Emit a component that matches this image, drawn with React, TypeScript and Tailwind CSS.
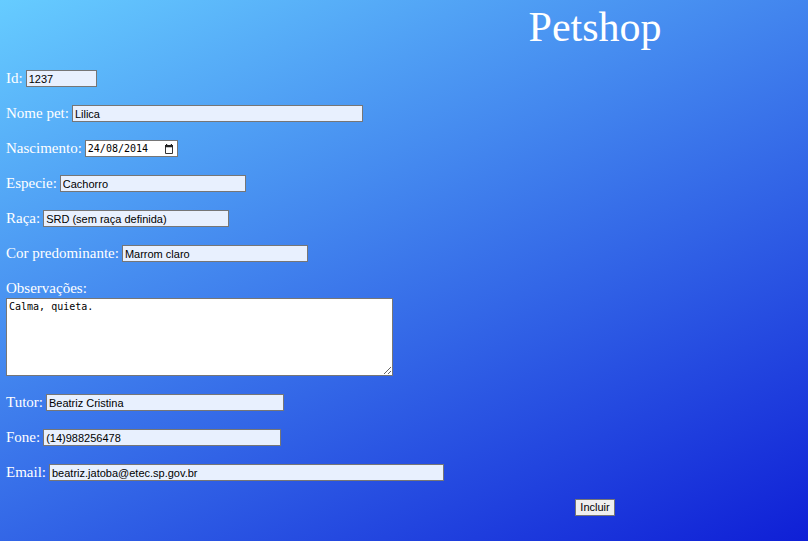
import { useState } from "react";
import type { ReactNode } from "react";

const inputClass =
  "h-[17px] min-w-0 border border-[#767676] bg-[#e8f0fe] px-[2px] font-['Liberation_Sans',Arial,sans-serif] text-[11px] leading-[15px] text-black outline-none";

type FieldProps = {
  id: string;
  label: string;
  value: string;
  width: string;
  type?: string;
};

function Row({ children }: { children: ReactNode }) {
  return <div className="flex h-[17px] items-start gap-[3px]">{children}</div>;
}

function Label({ htmlFor, children }: { htmlFor: string; children: ReactNode }) {
  return (
    <label htmlFor={htmlFor} className="shrink-0 text-[15px] leading-[17px]">
      {children}
    </label>
  );
}

function Field({ id, label, value, width, type = "text" }: FieldProps) {
  return (
    <Row>
      <Label htmlFor={id}>{label}</Label>
      <input id={id} name={id} type={type} defaultValue={value} className={`${inputClass} ${width}`} />
    </Row>
  );
}

function CalendarIcon() {
  return (
    <svg width="10" height="10" viewBox="0 0 10 10" fill="none" aria-hidden="true">
      <path d="M1.5 1.5h7v8h-7z" stroke="#333" />
      <path d="M1 1h8v2.2H1zM2 0h1.2v1.5H2zM6.8 0H8v1.5H6.8z" fill="#222" />
    </svg>
  );
}

function DateField() {
  const [date, setDate] = useState("24/08/2014");
  return (
    <Row>
      <Label htmlFor="nascimento">Nascimento:</Label>
      <div className="flex h-[17px] w-[93px] items-center border border-[#767676] bg-white pr-[3px] pl-[2px]">
        <input
          id="nascimento"
          name="nascimento"
          type="text"
          value={date}
          onChange={(e) => setDate(e.target.value)}
          className="min-w-0 flex-1 font-['DejaVu_Sans_Mono',monospace] text-[10px] leading-[15px] text-black outline-none"
        />
        <button type="button" aria-label="Abrir calendário">
          <CalendarIcon />
        </button>
      </div>
    </Row>
  );
}

export default function App() {
  return (
    <main className="min-h-screen overflow-hidden bg-[linear-gradient(155deg,#66ccff,#0f1fd6)] px-[6px] pb-6 font-['Liberation_Serif','Times_New_Roman',serif] text-white">
      <h1 className="ml-[48%] pt-[3px] text-center font-['Palatino_Linotype',Palatino,'Liberation_Serif',serif] text-[42px] leading-[48px]">
        Petshop
      </h1>
      <form className="mt-[19px] flex flex-col gap-[18px]" onSubmit={(e) => e.preventDefault()}>
        <Field id="id" label="Id:" value="1237" width="w-[71px]" />
        <Field id="nome" label="Nome pet:" value="Lilica" width="w-[291px]" />
        <DateField />
        <Field id="especie" label="Especie:" value="Cachorro" width="w-[186px]" />
        <Field id="raca" label="Raça:" value="SRD (sem raça definida)" width="w-[186px]" />
        <Field id="cor" label="Cor predominante:" value="Marrom claro" width="w-[186px]" />
        <div className="flex flex-col gap-px">
          <Label htmlFor="observacoes">Observações:</Label>
          <textarea
            id="observacoes"
            name="observacoes"
            defaultValue="Calma, quieta."
            className="h-[78px] w-[387px] resize border border-[#767676] bg-white p-[2px] font-['DejaVu_Sans_Mono',monospace] text-[10px] leading-3 text-black outline-none"
          />
        </div>
        <Field id="tutor" label="Tutor:" value="Beatriz Cristina" width="w-[238px]" />
        <Field id="fone" label="Fone:" value="(14)988256478" width="w-[238px]" type="tel" />
        <Field id="email" label="Email:" value="beatriz.jatoba@etec.sp.gov.br" width="w-[395px]" type="email" />
        <div className="ml-[48%] flex justify-center">
          <button
            type="submit"
            className="h-[17px] border border-[#767676] bg-[#efefef] px-1 font-['Liberation_Sans',Arial,sans-serif] text-[11px] leading-[15px] text-black"
          >
            Incluir
          </button>
        </div>
      </form>
    </main>
  );
}
